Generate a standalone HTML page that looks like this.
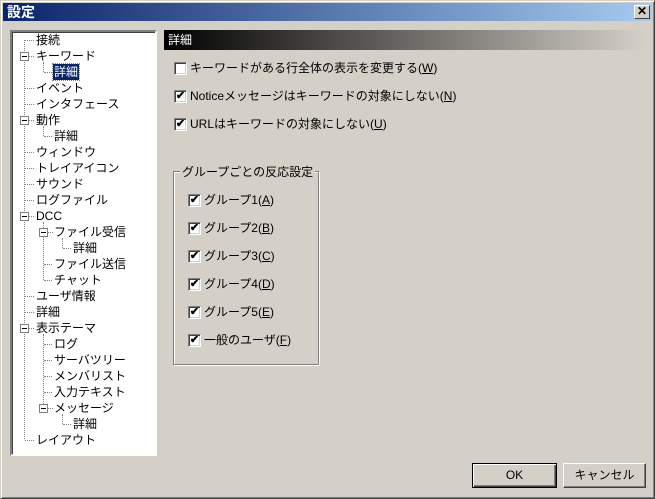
<!DOCTYPE html><html><head><meta charset="utf-8"><style>
*{margin:0;padding:0;box-sizing:border-box}
body{width:655px;height:499px;background:#d4d0c8;font-family:"Liberation Sans","Noto Sans CJK JP",sans-serif;font-size:12px;color:#000;position:relative;overflow:hidden}
.a{position:absolute}
.frame{left:0;top:0;width:655px;height:499px;border:1px solid;border-color:#d4d0c8 #404040 #404040 #d4d0c8;box-shadow:inset 1px 1px 0 #fff,inset -1px -1px 0 #808080}
.title{left:3px;top:3px;width:649px;height:18px;background:linear-gradient(90deg,#0a246a,#a6caf0);color:#fff;font-weight:bold;font-size:14px;line-height:18px;padding-left:4px}
.close{left:634px;top:5px;width:16px;height:14px;background:#d4d0c8;border:1px solid;border-color:#fff #404040 #404040 #fff;font-size:12px;line-height:11px;text-align:center;font-weight:bold;color:#000}
.tree{left:10px;top:30px;width:147px;height:426px;background:#fff;border:2px solid;border-color:#808080 #fff #fff #808080;box-shadow:inset 1px 1px 0 #404040}
.t{position:absolute;height:16px;line-height:16px;white-space:nowrap}
.v{position:absolute;border-left:1px dotted #808080;width:0}
.h{position:absolute;border-top:1px dotted #808080;height:0}
.box{position:absolute;width:9px;height:9px;border:1px solid #808080;background:#fff}
.box:after{content:"";position:absolute;left:1px;top:3px;width:5px;height:1px;background:#000}
.hdr{left:164px;top:30px;width:482px;height:20px;background:linear-gradient(90deg,#000 0%,#d4d0c8 100%);color:#fff;line-height:20px;padding-left:4px}
.cb{position:absolute;width:13px;height:13px;background:#fff;border:1px solid;border-color:#808080 #fff #fff #808080;box-shadow:inset 1px 1px 0 #404040,inset -1px -1px 0 #d4d0c8;font-size:11px;line-height:11px;text-align:center;font-weight:bold}
.lbl{position:absolute;line-height:14px;white-space:nowrap}
u{text-decoration:underline}
.grp{left:173px;top:171px;width:146px;height:194px;border:1px solid #808080;box-shadow:1px 1px 0 #fff,inset 1px 1px 0 #fff}
.btn{position:absolute;top:463px;height:25px;border:1px solid;border-color:#fff #404040 #404040 #fff;box-shadow:inset -1px -1px 0 #808080;text-align:center;line-height:22px}
</style></head><body>
<div class="a frame"></div>
<div class="a title">設定</div>
<div class="a close">✕</div>
<div class="a tree"></div>
<!-- tree lines (absolute to body) -->
<div class="v" style="left:24px;top:40px;height:399px"></div>
<div class="v" style="left:43px;top:62px;height:10px"></div>
<div class="v" style="left:43px;top:126px;height:10px"></div>
<div class="v" style="left:43px;top:222px;height:58px"></div>
<div class="v" style="left:62px;top:238px;height:10px"></div>
<div class="v" style="left:43px;top:334px;height:74px"></div>
<div class="v" style="left:62px;top:414px;height:10px"></div>
<div class="h" style="left:25px;top:40px;width:9px"></div>
<div class="h" style="left:29px;top:56px;width:5px"></div>
<div class="h" style="left:44px;top:72px;width:8px"></div>
<div class="h" style="left:25px;top:88px;width:9px"></div>
<div class="h" style="left:25px;top:104px;width:9px"></div>
<div class="h" style="left:29px;top:120px;width:5px"></div>
<div class="h" style="left:44px;top:136px;width:8px"></div>
<div class="h" style="left:25px;top:152px;width:9px"></div>
<div class="h" style="left:25px;top:168px;width:9px"></div>
<div class="h" style="left:25px;top:184px;width:9px"></div>
<div class="h" style="left:25px;top:200px;width:9px"></div>
<div class="h" style="left:29px;top:216px;width:5px"></div>
<div class="h" style="left:48px;top:232px;width:5px"></div>
<div class="h" style="left:63px;top:248px;width:8px"></div>
<div class="h" style="left:44px;top:264px;width:8px"></div>
<div class="h" style="left:44px;top:280px;width:8px"></div>
<div class="h" style="left:25px;top:296px;width:9px"></div>
<div class="h" style="left:25px;top:312px;width:9px"></div>
<div class="h" style="left:29px;top:328px;width:5px"></div>
<div class="h" style="left:44px;top:344px;width:8px"></div>
<div class="h" style="left:44px;top:360px;width:8px"></div>
<div class="h" style="left:44px;top:376px;width:8px"></div>
<div class="h" style="left:44px;top:392px;width:8px"></div>
<div class="h" style="left:48px;top:408px;width:5px"></div>
<div class="h" style="left:63px;top:424px;width:8px"></div>
<div class="h" style="left:25px;top:440px;width:9px"></div>
<div class="box" style="left:20px;top:52px"></div>
<div class="box" style="left:20px;top:116px"></div>
<div class="box" style="left:20px;top:212px"></div>
<div class="box" style="left:39px;top:228px"></div>
<div class="box" style="left:20px;top:324px"></div>
<div class="box" style="left:39px;top:404px"></div>
<div class="t" style="left:36px;top:32px">接続</div>
<div class="t" style="left:36px;top:48px">キーワード</div>
<div class="t" style="left:53px;top:64px;background:#0a246a;color:#fff;padding:0 1px;outline:1px dotted #888">詳細</div>
<div class="t" style="left:36px;top:80px">イベント</div>
<div class="t" style="left:36px;top:96px">インタフェース</div>
<div class="t" style="left:36px;top:112px">動作</div>
<div class="t" style="left:54px;top:128px">詳細</div>
<div class="t" style="left:36px;top:144px">ウィンドウ</div>
<div class="t" style="left:36px;top:160px">トレイアイコン</div>
<div class="t" style="left:36px;top:176px">サウンド</div>
<div class="t" style="left:36px;top:192px">ログファイル</div>
<div class="t" style="left:36px;top:208px">DCC</div>
<div class="t" style="left:54px;top:224px">ファイル受信</div>
<div class="t" style="left:73px;top:240px">詳細</div>
<div class="t" style="left:54px;top:256px">ファイル送信</div>
<div class="t" style="left:54px;top:272px">チャット</div>
<div class="t" style="left:36px;top:288px">ユーザ情報</div>
<div class="t" style="left:36px;top:304px">詳細</div>
<div class="t" style="left:36px;top:320px">表示テーマ</div>
<div class="t" style="left:54px;top:336px">ログ</div>
<div class="t" style="left:54px;top:352px">サーバツリー</div>
<div class="t" style="left:54px;top:368px">メンバリスト</div>
<div class="t" style="left:54px;top:384px">入力テキスト</div>
<div class="t" style="left:54px;top:400px">メッセージ</div>
<div class="t" style="left:73px;top:416px">詳細</div>
<div class="t" style="left:36px;top:432px">レイアウト</div>

<div class="a hdr">詳細</div>
<div class="cb" style="left:174px;top:62px"></div><div class="lbl" style="left:190px;top:61px">キーワードがある行全体の表示を変更する(<u>W</u>)</div>
<div class="cb" style="left:174px;top:90px">✔</div><div class="lbl" style="left:190px;top:89px">Noticeメッセージはキーワードの対象にしない(<u>N</u>)</div>
<div class="cb" style="left:174px;top:118px">✔</div><div class="lbl" style="left:190px;top:117px">URLはキーワードの対象にしない(<u>U</u>)</div>

<div class="a grp"></div>
<div class="lbl" style="left:180px;top:165px;background:#d4d0c8;padding:0 2px">グループごとの反応設定</div>
<div class="cb" style="left:188px;top:194px">✔</div><div class="lbl" style="left:204px;top:193px">グループ1(<u>A</u>)</div>
<div class="cb" style="left:188px;top:222px">✔</div><div class="lbl" style="left:204px;top:221px">グループ2(<u>B</u>)</div>
<div class="cb" style="left:188px;top:250px">✔</div><div class="lbl" style="left:204px;top:249px">グループ3(<u>C</u>)</div>
<div class="cb" style="left:188px;top:278px">✔</div><div class="lbl" style="left:204px;top:277px">グループ4(<u>D</u>)</div>
<div class="cb" style="left:188px;top:306px">✔</div><div class="lbl" style="left:204px;top:305px">グループ5(<u>E</u>)</div>
<div class="cb" style="left:188px;top:334px">✔</div><div class="lbl" style="left:204px;top:333px">一般のユーザ(<u>F</u>)</div>

<div class="btn" style="left:472px;width:85px;border:1px solid #000;box-shadow:inset 1px 1px 0 #fff,inset -1px -1px 0 #404040,inset -2px -2px 0 #808080">OK</div>
<div class="btn" style="left:563px;width:83px">キャンセル</div>
</body></html>
